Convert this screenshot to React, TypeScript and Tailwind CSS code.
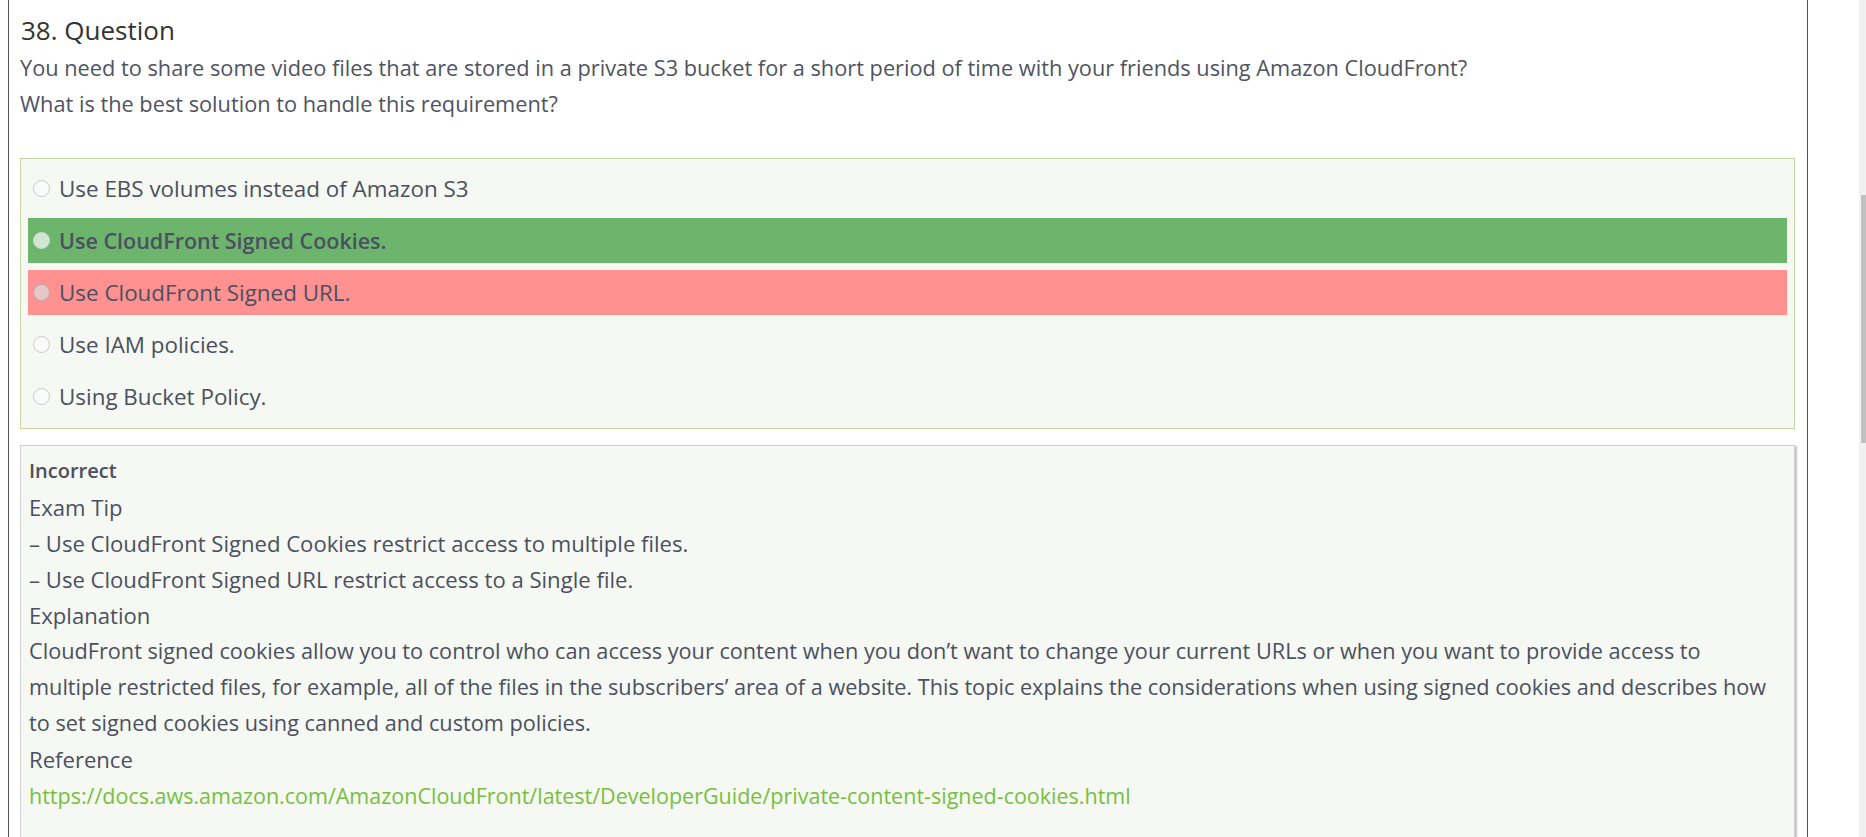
import React from "react";

type Option = {
  label: string;
  state?: "correct" | "wrong";
};

const options: Option[] = [
  { label: "Use EBS volumes instead of Amazon S3" },
  { label: "Use CloudFront Signed Cookies.", state: "correct" },
  { label: "Use CloudFront Signed URL.", state: "wrong" },
  { label: "Use IAM policies." },
  { label: "Using Bucket Policy." },
];

const font = { fontFamily: '"Open Sans", "Noto Sans", sans-serif' };

const OptionRow = ({ label, state }: Option) => {
  const rowBg =
    state === "correct" ? "bg-[#6db56d]" : state === "wrong" ? "bg-[#ff9191]" : "";
  const radio =
    state === "correct"
      ? "border-[#c9dcc9] bg-[#d3e6d3]"
      : state === "wrong"
        ? "border-[#b9a9a9] bg-[#e6c6c6]"
        : "border-[#c9c9c9] bg-[#fbfbfb]";
  return (
    <div className={`flex h-[45px] items-center pl-[5px] ${rowBg}`}>
      <span className={`h-[17px] w-[17px] shrink-0 rounded-full border ${radio}`} />
      <span
        className={`ml-[9px] leading-[36px] text-[#4b5060] ${state === "correct" ? "text-[21.5px] font-semibold" : "text-[22.4px]"}`}
      >
        {label}
      </span>
    </div>
  );
};

export default function App() {
  return (
    <div className="flex h-[837px] w-[1866px] overflow-hidden bg-white" style={font}>
      <div className="w-[8px] shrink-0" />

      {/* Question card */}
      <div className="w-[1800px] shrink-0 border-x border-[#4d5364] pl-[11px] pr-[12px] pt-[12px]">
        <h2 className="pl-[1px] text-[26px] leading-[36px] text-[#333333]">38. Question</h2>
        <p className="mt-[2px] text-[21.75px] leading-[36px] text-[#4f5462]">
          You need to share some video files that are stored in a private S3 bucket for a short
          period of time with your friends using Amazon CloudFront?
          <br />
          What is the best solution to handle this requirement?
        </p>

        {/* Options */}
        <div className="mt-[36px] flex flex-col gap-[7px] border border-[#c6d7a4] bg-[#f6f8f3] px-[7px] pb-[9px] pt-[7px]">
          {options.map((o) => (
            <OptionRow key={o.label} {...o} />
          ))}
        </div>

        {/* Explanation */}
        <div className="mt-[16px] border border-[#cfcfcf] bg-[#f6f8f3] px-[8px] pb-[60px] pt-[7px] text-[22.1px] leading-[36px] text-[#4b5060] shadow-[2px_1px_2px_rgba(0,0,0,0.25)]">
          <div className="text-[20px] font-semibold">Incorrect</div>
          <div>Exam Tip</div>
          <div>– Use CloudFront Signed Cookies restrict access to multiple files.</div>
          <div>– Use CloudFront Signed URL restrict access to a Single file.</div>
          <div>Explanation</div>
          <p className="text-[21.7px]">
            CloudFront signed cookies allow you to control who can access your content when you
            don’t want to change your current URLs or when you want to provide access to multiple
            restricted files, for example, all of the files in the subscribers’ area of a website.
            This topic explains the considerations when using signed cookies and describes how to
            set signed cookies using canned and custom policies.
          </p>
          <div>Reference</div>
          <a className="text-[21.5px] text-[#76c03e]" href="#">
            https://docs.aws.amazon.com/AmazonCloudFront/latest/DeveloperGuide/private-content-signed-cookies.html
          </a>
        </div>
      </div>

      <div className="flex-1" />

      {/* Scrollbar */}
      <div className="w-[7px] shrink-0 bg-[#f1f1f1] pl-[2px] pt-[195px]">
        <div className="h-[248px] bg-[#c1c1c1]" />
      </div>
    </div>
  );
}
